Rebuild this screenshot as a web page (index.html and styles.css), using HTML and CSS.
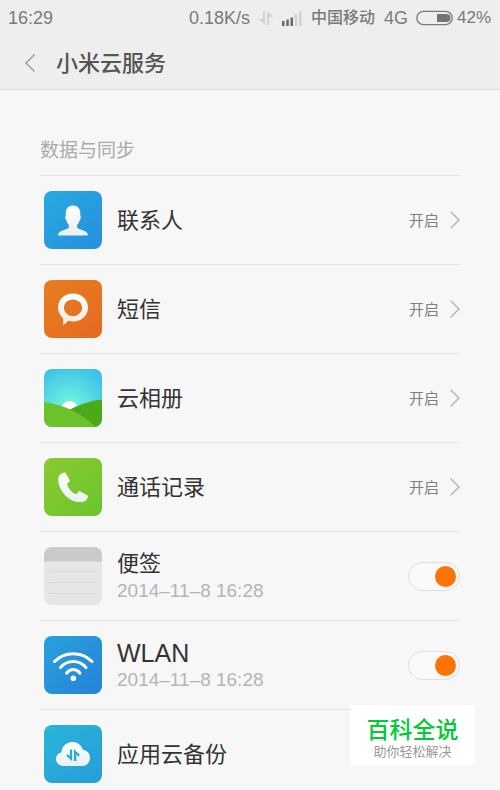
FILE: index.html
```html
<!DOCTYPE html>
<html lang="zh-CN">
<head>
<meta charset="utf-8">
<meta name="viewport" content="width=device-width, initial-scale=1">
<title>小米云服务</title>
<link rel="stylesheet" href="styles.css">
</head>
<body>
<header class="top">
  <div class="status">
    <span class="clock">16:29</span>
    <span>0.18K/s</span>
    <svg class="traffic" width="16" height="16" viewBox="0 0 16 16" aria-hidden="true"><path d="M7 1v14L.500 9H5V1zM9 15V1l6.500 6H11v8z" fill="#d2d2d2"/></svg>
    <svg class="signal" width="20" height="16" viewBox="0 0 20 16" aria-hidden="true"><path d="M0 11h2.500v5H0zM4.300 9.500h2.500V16H4.300zM8.500 7.500H11V16H8.500z" fill="#6c6c6c"/><path d="M12.700 4h2.500v12h-2.500zM17 1h2.500v15H17z" fill="#d2d2d2"/></svg>
    <span class="carrier">中国移动</span>
    <span class="network">4G</span>
    <svg class="battery" width="37" height="16" viewBox="0 0 37 16" aria-hidden="true"><rect x=".8" y="1.300" width="35.400" height="13.400" rx="6.700" fill="none" stroke="#7a7a7a" stroke-width="1.300"/><path d="M21 4h9.500a4 4 0 0 1 0 8H21z" fill="#747474"/></svg>
    <span class="percent">42%</span>
  </div>
  <div class="bar">
    <button class="back" type="button" aria-label="返回"><svg width="12" height="20" viewBox="0 0 12 20"><path d="M10.500 1.500 2 10l8.500 8.500" fill="none" stroke="#a2a2a2" stroke-width="1.600"/></svg></button>
    <h1 class="title">小米云服务</h1>
  </div>
</header>

<main class="content">
  <h2 class="section">数据与同步</h2>
  <ul class="list">
    <li class="row">
      <a class="link" href="#contacts">
        <svg class="icon" viewBox="0 0 58 58" aria-hidden="true">
          <defs><linearGradient id="blue" x1="0" y1="0" x2="1" y2="1"><stop stop-color="#28aadf"/><stop offset="1" stop-color="#268fdf"/></linearGradient><linearGradient id="white" x1="0" y1="0" x2="0" y2="1"><stop stop-color="#fff"/><stop offset="1" stop-color="#eaf0f3"/></linearGradient></defs>
          <rect width="58" height="58" rx="8" fill="url(#blue)"/>
          <path d="M29 14.500c4.500 0 7.300 3 7.300 7.500v3c.8.500.9 3-.6 4.200-.6 2-1.500 3.500-2.500 4.600v3c2 2.200 10.800 2.600 10.800 7.200 0 .3-.4.500-1 .5H15c-.6 0-1-.2-1-.5 0-4.600 8.800-5 10.800-7.200v-3c-1-1.100-1.900-2.600-2.500-4.600-1.500-1.200-1.400-3.700-.6-4.200v-3c0-4.500 2.800-7.500 7.300-7.500z" fill="url(#white)"/>
        </svg>
        <span class="name">联系人</span>
        <span class="state">开启</span>
        <svg class="chevron" viewBox="0 0 10 18" aria-hidden="true"><path d="m.7.700 8.300 8.300-8.300 8.300"/></svg>
      </a>
    </li>
    <li class="row">
      <a class="link" href="#sms">
        <svg class="icon" viewBox="0 0 58 58" aria-hidden="true">
          <defs><linearGradient id="orange" x1="0" y1="0" x2="1" y2="1"><stop stop-color="#e67d20"/><stop offset="1" stop-color="#e66a20"/></linearGradient><linearGradient id="cream" x1="0" y1="0" x2="0" y2="1"><stop stop-color="#fff"/><stop offset="1" stop-color="#f7e9df"/></linearGradient></defs>
          <rect width="58" height="58" rx="8" fill="url(#orange)"/>
          <path fill-rule="evenodd" d="M29 13.500c8.500 0 15 6 15 14s-6.500 14-15 14c-1.700 0-3.300-.2-4.800-.7-1.500 1.900-3 3.200-5.400 4.200.5-2.500.5-4.700.2-6.700-3-2.600-5-6.500-5-10.800 0-8 6.500-14 15-14zm0 6c-5 0-9 3.600-9 8.200s4 8.300 9 8.300 9-3.700 9-8.300-4-8.200-9-8.200z" fill="url(#cream)"/>
        </svg>
        <span class="name">短信</span>
        <span class="state">开启</span>
        <svg class="chevron" viewBox="0 0 10 18" aria-hidden="true"><path d="m.7.700 8.300 8.300-8.300 8.300"/></svg>
      </a>
    </li>
    <li class="row">
      <a class="link" href="#album">
        <svg class="icon" viewBox="0 0 58 58" aria-hidden="true">
          <defs><radialGradient id="sky" cx=".44" cy=".65" r=".75"><stop stop-color="#74f8df"/><stop offset=".35" stop-color="#62e4e0"/><stop offset="1" stop-color="#3cc0e8"/></radialGradient><clipPath id="tile"><rect width="58" height="58" rx="8"/></clipPath></defs>
          <g clip-path="url(#tile)"><path d="M0 0h58v58H0z" fill="url(#sky)"/><circle cx="25.500" cy="40" r="8" fill="#fff"/><path d="M25 41c9-5 20-9 33-10.500V58H25z" fill="#4caa19"/><path d="M0 33c20 2.500 39 12 51.500 25H0z" fill="#6bc22b"/></g>
        </svg>
        <span class="name">云相册</span>
        <span class="state">开启</span>
        <svg class="chevron" viewBox="0 0 10 18" aria-hidden="true"><path d="m.7.700 8.300 8.300-8.300 8.300"/></svg>
      </a>
    </li>
    <li class="row">
      <a class="link" href="#calls">
        <svg class="icon" viewBox="0 0 58 58" aria-hidden="true">
          <defs><linearGradient id="green" x1="0" y1="0" x2="1" y2="1"><stop stop-color="#8bc92f"/><stop offset="1" stop-color="#69c62b"/></linearGradient></defs>
          <rect width="58" height="58" rx="8" fill="url(#green)"/>
          <path d="M20 14.500c.7-.3 1.300 0 1.600.6l4 6.800c.4.700.2 1.300-.3 1.800-1.300 1-2.300 1.700-2 3.400 1.200 4 4.300 7.300 8 8.900 1.400.3 2.100-.9 3-2.300.4-.6 1-.8 1.700-.5l7.200 4c.7.400 1 1 .7 1.700-.8 3-3.200 5-6.800 5.200-5.700.2-11.600-2.200-16.100-6.900-4.300-4.600-6.700-10.600-6.800-15.400 0-3.800 2.500-6.300 5.800-7.300z" fill="url(#white)"/>
        </svg>
        <span class="name">通话记录</span>
        <span class="state">开启</span>
        <svg class="chevron" viewBox="0 0 10 18" aria-hidden="true"><path d="m.7.700 8.300 8.300-8.300 8.300"/></svg>
      </a>
    </li>
    <li class="row">
      <svg class="icon" viewBox="0 0 58 58" aria-hidden="true">
        <g clip-path="url(#tile)"><path d="M0 0h58v58H0z" fill="#e6e6e6"/><path d="M0 0h58v14.500H0z" fill="#cacaca"/><path d="M5 24.500h48M5 35.500h48M5 46.500h48" stroke="#d9d9d9"/></g>
      </svg>
      <label class="label" for="notes"><span class="name">便签</span><span class="date">2014–11–8 16:28</span></label>
      <input class="toggle" id="notes" type="checkbox" checked>
    </li>
    <li class="row">
      <svg class="icon" viewBox="0 0 58 58" aria-hidden="true">
        <defs><linearGradient id="wifi" x1="0" y1="0" x2="1" y2="1"><stop stop-color="#28a2dd"/><stop offset="1" stop-color="#2582d8"/></linearGradient></defs>
        <rect width="58" height="58" rx="8" fill="url(#wifi)"/>
        <g fill="none" stroke="#fff" stroke-width="3" stroke-linecap="round"><path d="M10.500 25.500c10.500-10.500 27-10.500 37.500 0M16.500 31.500c7-8 18.500-8 25.500 0M22.500 37.200c4-4.800 9.500-4.800 13.500 0"/></g><circle cx="29.300" cy="42.300" r="2.800" fill="#fff"/>
      </svg>
      <label class="label" for="wlan"><span class="name latin">WLAN</span><span class="date">2014–11–8 16:28</span></label>
      <input class="toggle" id="wlan" type="checkbox" checked>
    </li>
    <li class="row">
      <a class="link" href="#backup">
        <svg class="icon" viewBox="0 0 58 58" aria-hidden="true">
          <defs><linearGradient id="cyan" x1="0" y1="0" x2="1" y2="1"><stop stop-color="#28b5d8"/><stop offset="1" stop-color="#289dd8"/></linearGradient></defs>
          <rect width="58" height="58" rx="8" fill="url(#cyan)"/>
          <path d="M20 41c-4.700 0-8-3-8-7 0-3.400 2.300-6 5.500-6.800C18 21.200 22.500 17 28.500 17c5 0 9 3.200 10.600 8 4 .4 6.900 3.600 6.900 7.800 0 4.700-3.500 8.200-8 8.200z" fill="url(#white)"/>
          <path d="M28.200 24.500v11.800l-6-5.500 1.500-1.500 2.200 1.700v-6.500zM30 36V24.200l6 5.700-1.500 1.500-2.200-1.900V36z" fill="#29a9d6"/>
        </svg>
        <span class="name">应用云备份</span>
      </a>
    </li>
  </ul>
</main>

<aside class="badge">
  <strong class="badge-title">百科全说</strong>
  <span class="badge-text">助你轻松解决</span>
</aside>
</body>
</html>
```

FILE: styles.css
```css
* {
  box-sizing: border-box;
}

html {
  scrollbar-width: none;
}

body {
  margin: 0;
  background: #f7f7f7;
  color: #333;
  font-family: "Liberation Sans", "Noto Sans CJK SC", sans-serif;
}

.top {
  background: #eee;
  border-bottom: 1px solid #dcdcdc;
}

.status {
  display: flex;
  align-items: center;
  height: 36px;
  padding: 0 9px 0 8px;
  color: #7a7a7a;
  font-size: 18px;
  line-height: 20px;
}

.clock {
  margin-right: auto;
}

.traffic {
  margin-left: 8px;
}

.signal {
  margin-left: 8px;
}

.carrier {
  margin-left: 9px;
  font-size: 16px;
  font-weight: 500;
}

.network {
  margin-left: 9px;
}

.battery {
  margin-left: 8px;
}

.percent {
  margin-left: 4px;
  font-size: 17px;
}

.bar {
  display: flex;
  align-items: center;
  gap: 20px;
  height: 53px;
  padding: 0 24px;
}

.back {
  display: flex;
  padding: 0;
  border: 0;
  background: none;
}

.title {
  margin: 0;
  padding-top: 2px;
  color: #555;
  font-size: 22px;
  font-weight: 500;
  line-height: 32px;
}

.content {
  padding: 46px 40px 0;
}

.section {
  margin: 0;
  padding-bottom: 9px;
  color: #aaa;
  font-size: 19px;
  font-weight: 400;
  line-height: 30px;
}

.list {
  margin: 0;
  padding: 0;
  list-style: none;
}

.row {
  display: flex;
  align-items: center;
  height: 89px;
  padding-left: 4px;
  border-top: 1px solid #e4e4e4;
}

.link {
  display: flex;
  flex: 1;
  align-items: center;
  color: inherit;
  text-decoration: none;
}

.icon {
  flex: none;
  width: 58px;
  height: 58px;
  margin-right: 15px;
}

.name {
  padding-top: 2px;
  font-size: 22px;
  line-height: 28px;
}

.latin {
  font-size: 25px;
}

.label {
  display: flex;
  flex: 1;
  flex-direction: column;
}

.date {
  color: #b4b4b4;
  font-size: 19px;
  line-height: 26px;
}

.state {
  margin-left: auto;
  padding-top: 2px;
  color: #808080;
  font-size: 15px;
  line-height: 22px;
}

.chevron {
  width: 10px;
  height: 18px;
  margin-left: 11px;
  fill: none;
  stroke: #b4b4b4;
  stroke-width: 1.4;
}

.toggle {
  display: flex;
  align-items: center;
  appearance: none;
  width: 52px;
  height: 29px;
  margin: 0;
  padding: 0 3px;
  border: 1px solid #dedede;
  border-radius: 15px;
  background: #f9f9f9;
}

.toggle::before {
  content: "";
  width: 21px;
  height: 21px;
  border-radius: 50%;
  background: #ccc;
}

.toggle:checked::before {
  margin-left: auto;
  background: #ff7300;
}

.badge {
  position: fixed;
  right: 25px;
  bottom: 25px;
  display: flex;
  flex-direction: column;
  align-items: center;
  width: 125px;
  height: 60px;
  padding-top: 11px;
  background: #fff;
}

.badge-title {
  color: #00cb35;
  font-size: 23px;
  font-weight: 500;
  line-height: 28px;
}

.badge-text {
  color: #999;
  font-size: 13px;
  line-height: 16px;
}
```
